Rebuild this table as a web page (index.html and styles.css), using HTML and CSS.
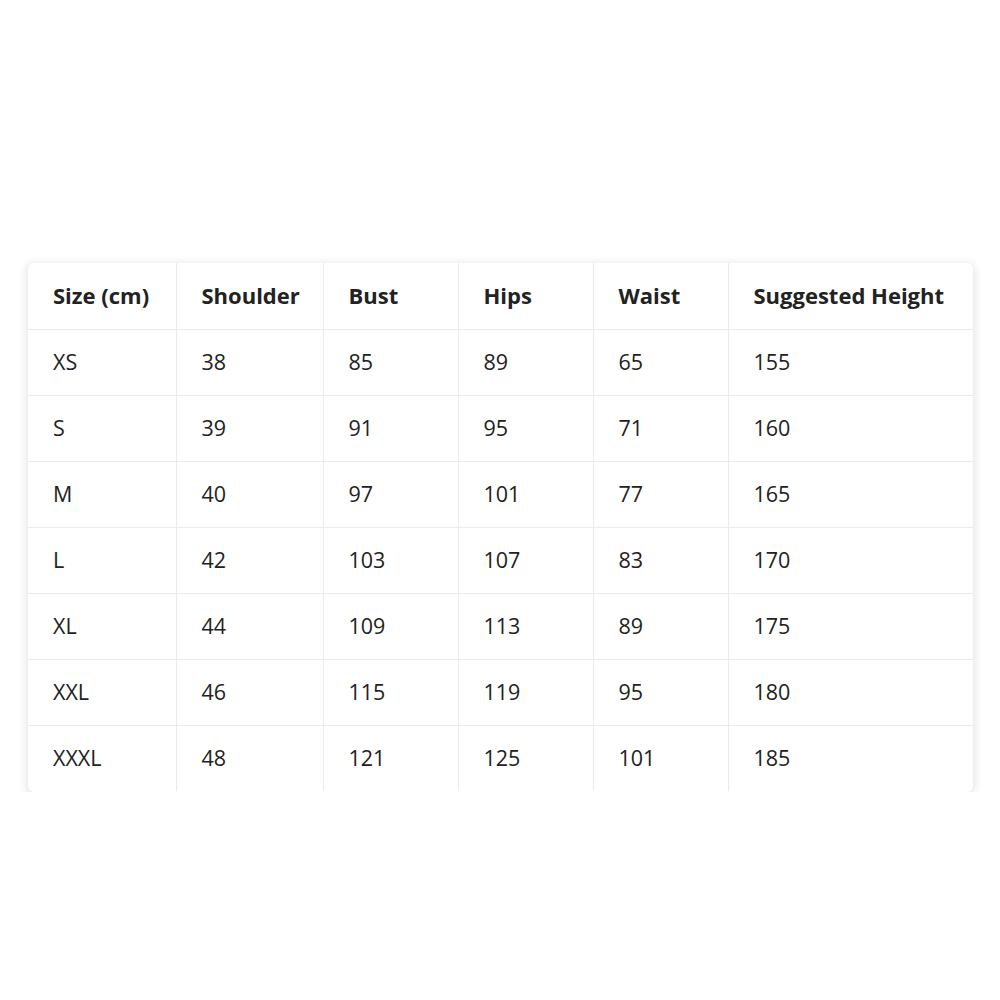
FILE: index.html
```html
<!DOCTYPE html>
<html lang="en">
<head>
<meta charset="utf-8">
<title>Size Chart</title>
<link rel="stylesheet" href="styles.css">
</head>
<body>
<div class="page">
  <div class="card">
    <table class="chart">
      <colgroup>
        <col class="c1"><col class="c2"><col class="c3"><col class="c4"><col class="c5"><col class="c6">
      </colgroup>
      <thead>
        <tr><th>Size (cm)</th><th>Shoulder</th><th>Bust</th><th>Hips</th><th>Waist</th><th>Suggested Height</th></tr>
      </thead>
      <tbody>
        <tr><td>XS</td><td>38</td><td>85</td><td>89</td><td>65</td><td>155</td></tr>
        <tr><td>S</td><td>39</td><td>91</td><td>95</td><td>71</td><td>160</td></tr>
        <tr><td>M</td><td>40</td><td>97</td><td>101</td><td>77</td><td>165</td></tr>
        <tr><td>L</td><td>42</td><td>103</td><td>107</td><td>83</td><td>170</td></tr>
        <tr><td>XL</td><td>44</td><td>109</td><td>113</td><td>89</td><td>175</td></tr>
        <tr><td>XXL</td><td>46</td><td>115</td><td>119</td><td>95</td><td>180</td></tr>
        <tr><td>XXXL</td><td>48</td><td>121</td><td>125</td><td>101</td><td>185</td></tr>
      </tbody>
    </table>
  </div>
</div>
</body>
</html>
```
FILE: styles.css
```css
html, body {
  margin: 0;
  padding: 0;
  background: #ffffff;
}
.page {
  padding: 263px 0 0 28px;
}
.card {
  width: 945px;
  height: 529px;
  background: #fff;
  border-radius: 6px;
  box-shadow: 0 2px 8px 2px rgba(0,0,0,0.1);
  overflow: hidden;
}
.chart {
  width: 945px;
  border-collapse: collapse;
  table-layout: fixed;
  font-family: "Open Sans", "Noto Sans", sans-serif;
  font-size: 21.5px;
  line-height: 1.2;
  color: #222222;
}
.c1 { width: 148px; }
.c2 { width: 147px; }
.c3 { width: 135px; }
.c4 { width: 135px; }
.c5 { width: 135px; }
.c6 { width: 245px; }
.chart th, .chart td {
  height: 66px;
  padding: 0 0 0 25px;
  text-align: left;
  box-sizing: border-box;
  border: 1px solid #ebebeb;
  white-space: nowrap;
}
.chart th {
  font-weight: 700;
  font-size: 22px;
  padding-bottom: 2px;
}
.chart td {
  font-weight: 400;
}
.chart tr:first-child th { border-top: none; }
.chart tr > :first-child { border-left: none; }
.chart tr > :last-child { border-right: none; }
.chart tbody tr:last-child td { border-bottom: none; }
```
